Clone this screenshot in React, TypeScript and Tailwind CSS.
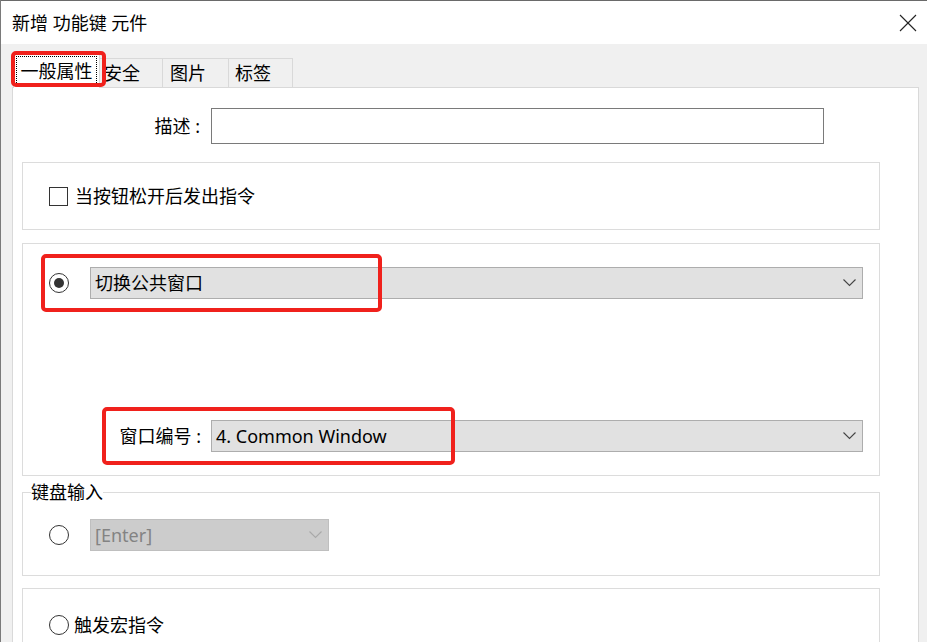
import React from 'react'

const font = "font-['Noto_Sans','Noto_Sans_CJK_SC',sans-serif]"

function Chevron({ color = '#444' }: { color?: string }) {
  return (
    <svg width="13" height="8" viewBox="0 0 13 8" className="shrink-0">
      <polyline points="0.5,0.5 6.5,6.5 12.5,0.5" fill="none" stroke={color} strokeWidth="1.1" />
    </svg>
  )
}

function Combo({ text, width, disabled }: { text: string; width: string; disabled?: boolean }) {
  return (
    <div
      className={`flex h-[32px] items-center justify-between border pl-[4px] pr-[6px] ${width} ${
        disabled ? 'border-[#bfbfbf] bg-[#cccccc] text-[#838383]' : 'border-[#adadad] bg-[#e1e1e1] text-black'
      }`}
    >
      <span>{text}</span>
      <Chevron color={disabled ? '#a9a9a9' : '#444'} />
    </div>
  )
}

function Radio({ checked }: { checked?: boolean }) {
  return (
    <span className="flex h-[20px] w-[20px] shrink-0 items-center justify-center rounded-full border border-[#333]">
      {checked && <span className="h-[10px] w-[10px] rounded-full bg-[#333]" />}
    </span>
  )
}

export default function App() {
  return (
    <div className={`relative flex h-[642px] w-[927px] flex-col overflow-hidden border-l border-[#7a7a7a] bg-[#f0f0f0] text-[18px] leading-[24px] text-black ${font}`}>
      {/* Title bar */}
      <div className="flex h-[44px] shrink-0 items-center justify-between border-t border-[#6a6a6a] bg-white pl-[11px] pr-[10px]">
        <span className="text-[18px]">新增 功能键 元件</span>
        <svg width="18" height="18" viewBox="0 0 18 18">
          <line x1="1" y1="1" x2="17" y2="17" stroke="#222" strokeWidth="1.1" />
          <line x1="17" y1="1" x2="1" y2="17" stroke="#222" strokeWidth="1.1" />
        </svg>
      </div>

      {/* Tabs */}
      <div className="flex h-[43px] shrink-0 items-end pl-[12px]">
        <div className="relative z-10 -mb-px flex h-[35px] w-[87px] border-x border-t border-[#d9d9d9] bg-white p-[2px] pb-[3px]">
          <span className="flex flex-1 items-center justify-center border border-dotted border-black">一般属性</span>
        </div>
        <div className="flex h-[29px] w-[63px] items-center border-t border-r border-[#d9d9d9] pl-[4px]">安全</div>
        <div className="flex h-[29px] w-[66px] items-center border-t border-r border-[#d9d9d9] pl-[7px]">图片</div>
        <div className="flex h-[29px] w-[64px] items-center border-t border-r border-[#d9d9d9] pl-[6px]">标签</div>
      </div>

      {/* Panel */}
      <div className="ml-[11px] mr-[8px] flex-1 border border-[#d9d9d9] bg-white pl-[9px] pt-[20px]">
        <div className="flex items-center">
          <span className="w-[178px] text-right">描述 :</span>
          <div className="ml-[11px] h-[36px] w-[613px] border border-[#7a7a7a]" />
        </div>

        <div className="mt-[18px] flex h-[68px] w-[858px] items-center border border-[#dcdcdc] pl-[26px]">
          <span className="h-[19px] w-[19px] border border-[#333]" />
          <span className="ml-[7px]">当按钮松开后发出指令</span>
        </div>

        <div className="mt-[13px] h-[233px] w-[858px] border border-[#dcdcdc] pl-[26px] pt-[23px]">
          <div className="flex items-center">
            <Radio checked />
            <div className="ml-[21px]">
              <Combo text="切换公共窗口" width="w-[773px]" />
            </div>
          </div>
          <div className="mt-[121px] flex items-center">
            <span className="ml-[-26px] w-[178px] text-right">窗口编号 :</span>
            <div className="ml-[10px]">
              <Combo text="4. Common Window" width="w-[652px]" />
            </div>
          </div>
        </div>

        <fieldset className="mt-[4px] w-[858px] border border-[#dcdcdc] pb-[24px] pl-[26px] pt-[15px]">
          <legend className="-ml-[18px] leading-[24px]">键盘输入</legend>
          <div className="flex items-center">
            <Radio />
            <div className="ml-[21px]">
              <Combo text="[Enter]" width="w-[239px]" disabled />
            </div>
          </div>
        </fieldset>

        <div className="mt-[12px] h-[80px] w-[858px] border border-[#dcdcdc] pl-[26px] pt-[24px]">
          <div className="flex items-center">
            <Radio />
            <span className="ml-[5px]">触发宏指令</span>
          </div>
        </div>
      </div>

      {/* Red annotation boxes */}
      <div className="absolute left-[10px] top-[51px] z-20 h-[36px] w-[95px] rounded-[5px] border-4 border-[#f0211c]" />
      <div className="absolute left-[40px] top-[254px] z-20 h-[58px] w-[341px] rounded-[5px] border-4 border-[#f0211c]" />
      <div className="absolute left-[101px] top-[407px] z-20 h-[58px] w-[353px] rounded-[5px] border-4 border-[#f0211c]" />
    </div>
  )
}
